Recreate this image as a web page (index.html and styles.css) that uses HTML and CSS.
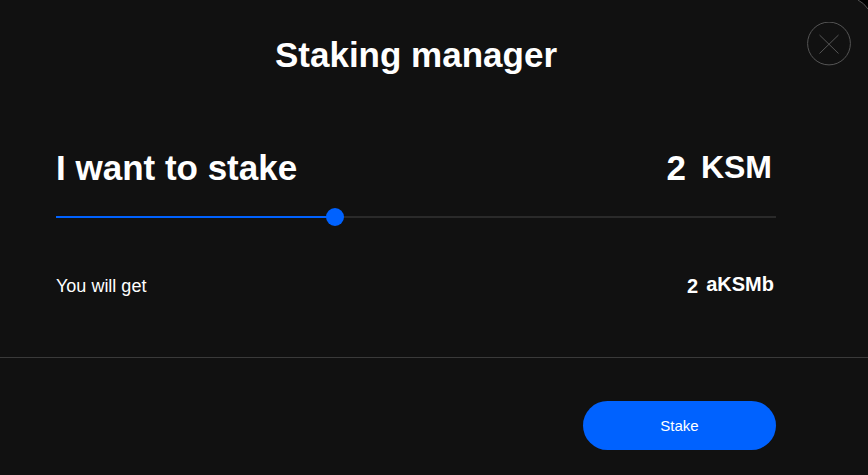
FILE: index.html
```html
<!DOCTYPE html>
<html lang="en">
<head>
<meta charset="utf-8">
<title>Staking manager</title>
<link rel="stylesheet" href="styles.css">
</head>
<body>
<main class="dialog">
  <svg class="corner" viewBox="0 0 10 9" aria-hidden="true">
    <path class="corner-fill" d="M0 0Q6 3 10 9V0Z"/>
    <path class="corner-line" d="M0 0Q6 3 10 9"/>
  </svg>
  <button class="close" type="button" aria-label="Close">
    <svg viewBox="0 0 44 44" aria-hidden="true">
      <circle cx="22" cy="21.5" r="21.4"/>
      <path d="M12.5 13L31.5 31.5M31.5 13L12.5 31.5"/>
    </svg>
  </button>
  <header class="header">
    <h1 class="heading">Staking manager</h1>
  </header>
  <section class="content">
    <div class="row">
      <label class="heading" for="amount">I want to stake</label>
      <div class="value">
        <output class="number" for="amount">2</output>
        <span class="unit">KSM</span>
      </div>
    </div>
    <input class="slider" id="amount" type="range" min="0" max="5.2" step="0.1" value="2">
    <div class="row result">
      <span class="result-label">You will get</span>
      <div class="value value-small">
        <output class="number" for="amount">2</output>
        <span class="unit">aKSMb</span>
      </div>
    </div>
  </section>
  <footer class="footer">
    <button class="stake" type="button">Stake</button>
  </footer>
</main>
</body>
</html>
```
FILE: styles.css
```css
* {
  box-sizing: border-box;
}

body {
  margin: 0;
  background: #111;
  color: #fff;
  font-family: "Liberation Sans", Arial, sans-serif;
}

.dialog {
  position: relative;
}

.corner {
  position: absolute;
  top: 0;
  right: 0;
  width: 10px;
  height: 9px;
}

.corner-fill {
  fill: #000;
}

.corner-line {
  fill: none;
  stroke: #555;
}

.close {
  position: absolute;
  top: 22px;
  right: 17px;
  width: 44px;
  height: 44px;
  padding: 0;
  border: 0;
  background: none;
  cursor: pointer;
}

.close svg {
  display: block;
  fill: none;
  stroke: #555;
}

.header {
  padding: 33px 92px 0 56px;
  text-align: center;
}

.heading {
  margin: 0;
  font-size: 35px;
  line-height: 44px;
  font-weight: 700;
}

.content {
  padding: 69px 92px 59px 56px;
}

.row {
  display: flex;
  justify-content: space-between;
  align-items: center;
}

.value {
  display: flex;
  align-items: flex-start;
  gap: 15px;
  padding-right: 4px;
  font-size: 35px;
  line-height: 44px;
  font-weight: 700;
}

.value .unit {
  font-size: 32px;
  line-height: 42px;
}

.slider {
  display: block;
  width: 100%;
  height: 18px;
  margin: 18px 0 0;
  appearance: none;
  background: linear-gradient(#0062ff, #0062ff) left center / 38.5% 2px no-repeat,
    linear-gradient(#2a2a2a, #2a2a2a) center / 100% 2px no-repeat;
  cursor: pointer;
}

.slider::-webkit-slider-thumb {
  appearance: none;
  width: 18px;
  height: 18px;
  border-radius: 50%;
  background: #0062ff;
}

.result {
  margin-top: 48px;
}

.result-label {
  font-size: 18px;
  line-height: 24px;
}

.value-small {
  gap: 8px;
  padding-right: 2px;
  font-size: 20px;
  line-height: 24px;
}

.value-small .unit {
  font-size: 20px;
  line-height: 20px;
}

.footer {
  display: flex;
  justify-content: flex-end;
  padding: 43px 92px 25px 56px;
  border-top: 1px solid #3a3a3a;
}

.stake {
  width: 193px;
  height: 49px;
  border: 0;
  border-radius: 25px;
  background: #0062ff;
  color: #fff;
  font-family: inherit;
  font-size: 15px;
  cursor: pointer;
}
```
